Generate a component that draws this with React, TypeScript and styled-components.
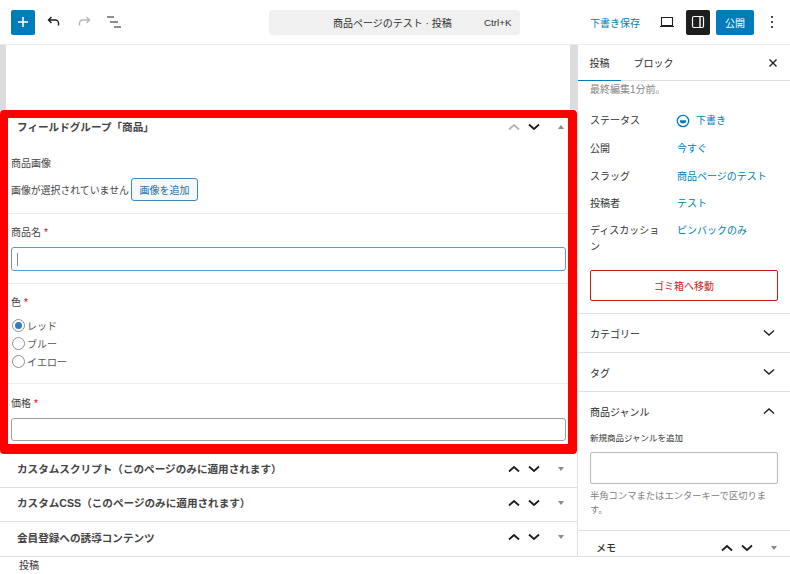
import React from 'react';
import styled, {createGlobalStyle} from 'styled-components';

const GlobalStyle = createGlobalStyle`
  html, body {
    margin: 0;
    padding: 0;
    background: #fff;
  }
  * {
    box-sizing: border-box;
  }
  body {
    font-family: "Liberation Sans", "Noto Sans CJK JP", sans-serif;
    color: #1e1e1e;
  }
`

const Page = styled.div`
  width: 790px;
  height: 574px;
  overflow: hidden;
  display: flex;
  flex-direction: column;
`

const TopBar = styled.header`
  height: 45px;
  flex-shrink: 0;
  display: flex;
  align-items: center;
  padding: 0 0 0 11px;
  border-bottom: 1px solid #ededed;
`

const AddButton = styled.button`
  width: 24px;
  height: 25px;
  border: 0;
  border-radius: 2px;
  background: #007cba;
  padding: 0;
  display: flex;
  align-items: center;
  justify-content: center;
  margin-right: 4px;
`

const ToolIcon = styled.span<{ $width?: number; $left?: number }>`
  width: ${(p) => p.$width ?? 30}px;
  height: 24px;
  margin-left: ${(p) => p.$left ?? 0}px;
  display: flex;
  align-items: center;
  justify-content: center;
  flex-shrink: 0;
`

const CommandBar = styled.div`
  width: 251px;
  height: 25px;
  margin-left: 140px;
  border-radius: 4px;
  background: #f0f0f0;
  display: flex;
  align-items: center;
  font-size: 10px;
  color: #2f2f2f;
`

const CommandTitle = styled.span`
  margin-left: 64px;
  width: 151px;
  white-space: nowrap;
`

const Shortcut = styled.span`
  font-size: 9.8px;
`

const SaveLink = styled.span`
  margin-left: 70px;
  font-size: 10px;
  color: #007cba;
  white-space: nowrap;
`

const ViewButton = styled.span`
  width: 24px;
  height: 25px;
  margin-left: 7px;
  border-radius: 2px;
  background: #1e1e1e;
  display: flex;
  align-items: center;
  justify-content: center;
  flex-shrink: 0;
`

const PublishButton = styled.span`
  width: 38px;
  height: 25px;
  margin-left: 6px;
  border-radius: 2px;
  background: #007cba;
  color: #fff;
  font-size: 10px;
  display: flex;
  align-items: center;
  justify-content: center;
  flex-shrink: 0;
`

const Body = styled.div`
  flex: 1;
  min-height: 0;
  display: flex;
`

const Main = styled.main`
  width: 578px;
  flex-shrink: 0;
  border-right: 1px solid #e0e0e0;
  overflow: hidden;
`

const Canvas = styled.div`
  height: 65px;
  border-left: 6px solid #dcdcdc;
  border-right: 7px solid #dcdcdc;
  background: #fff;
`

const Highlight = styled.section`
  width: 577px;
  height: 344px;
  border-style: solid;
  border-color: #ff0000;
  border-width: 8px 9px 10px 8px;
  border-radius: 4px;
  background: #fff;
  display: flex;
  flex-direction: column;
`

const BoxHeader = styled.div<{ $height?: number; $bordered?: boolean; $lift?: number }>`
  height: ${(p) => p.$height ?? 34}px;
  flex-shrink: 0;
  display: flex;
  align-items: center;
  padding-bottom: ${(p) => p.$lift ?? 0}px;
  border-bottom: ${(p) => (p.$bordered ? '1px solid #e0e0e0' : '0')};
`

const BoxTitle = styled.h2<{ $left: number }>`
  margin: 0 0 0 ${(p) => p.$left}px;
  flex: 1;
  font-size: 10.6px;
  font-weight: 700;
  color: #444;
  white-space: nowrap;
`

const Field = styled.div<{ $height: number; $top: number; $last?: boolean }>`
  height: ${(p) => p.$height}px;
  flex-shrink: 0;
  padding: ${(p) => p.$top}px 2px 0 3px;
  border-bottom: ${(p) => (p.$last ? '0' : '1px solid #ececec')};
`

const FieldLabel = styled.div`
  font-size: 10px;
  line-height: 14px;
  color: #444;
  white-space: nowrap;
`

const Required = styled.span`
  color: #e60000;
  margin-left: 3px;
`

const ImageRow = styled.div`
  display: flex;
  align-items: center;
  gap: 2px;
  margin-top: 7px;
  font-size: 9.9px;
  color: #444;
  white-space: nowrap;
`

const AddImageButton = styled.button`
  width: 67px;
  height: 23px;
  padding: 0;
  border: 1px solid #3f86bd;
  border-radius: 3px;
  background: #f6f7f7;
  color: #2271b1;
  font-family: inherit;
  font-size: 10px;
`

const TextBox = styled.div<{ $focused?: boolean }>`
  height: ${(p) => (p.$focused ? 24 : 23)}px;
  margin-top: 7px;
  border: 1px solid ${(p) => (p.$focused ? '#5d9acb' : '#9d9ea3')};
  border-radius: 3px;
  background: #fff;
  display: flex;
  align-items: center;
  padding-left: 5px;
`

const Caret = styled.span`
  width: 1px;
  height: 13px;
  background: #888;
`

const RadioList = styled.div`
  margin-top: 9px;
  display: flex;
  flex-direction: column;
  gap: 5px;
`

const RadioRow = styled.div`
  height: 13px;
  display: flex;
  align-items: center;
  gap: 2px;
  padding-left: 1px;
  font-size: 10px;
  color: #555;
`

const RadioMark = styled.span<{ $checked?: boolean }>`
  width: 13px;
  height: 13px;
  border-radius: 50%;
  border: 1px solid #8c8f94;
  background: #fff;
  display: flex;
  align-items: center;
  justify-content: center;

  &::after {
    content: '';
    width: 7px;
    height: 7px;
    border-radius: 50%;
    background: ${(p) => (p.$checked ? '#2f7fc5' : 'transparent')};
  }
`

const BoxControls = styled.div<{ $right: number }>`
  display: flex;
  align-items: center;
  margin-right: ${(p) => p.$right}px;
`

const ArrowSlot = styled.span`
  width: 20px;
  display: flex;
  justify-content: center;
`

const Toggle = styled.span<{ $up?: boolean }>`
  width: 0;
  height: 0;
  margin-left: 14px;
  border-left: 3px solid transparent;
  border-right: 3px solid transparent;
  ${(p) => (p.$up ? 'border-bottom' : 'border-top')}: 4px solid #8a8a8a;
`

const Sidebar = styled.aside`
  flex: 1;
  min-width: 0;
  overflow: hidden;
`

const Tabs = styled.div`
  height: 36px;
  display: flex;
  align-items: stretch;
  border-bottom: 1px solid #e0e0e0;
  font-size: 10px;
`

const Tab = styled.div<{ $active?: boolean; $width: number }>`
  width: ${(p) => p.$width}px;
  display: flex;
  align-items: center;
  justify-content: center;
  margin-bottom: -1px;
  border-bottom: 1px solid ${(p) => (p.$active ? '#007cba' : 'transparent')};
  color: #2b2b2b;
`

const CloseSlot = styled.span`
  margin-left: auto;
  width: 34px;
  display: flex;
  align-items: center;
  justify-content: center;
`

const Edited = styled.div`
  padding: 2px 0 0 12px;
  font-size: 10px;
  line-height: 14px;
  color: #858585;
`

const SummaryList = styled.div`
  padding: 16px 12px 0;
`

const SummaryRow = styled.div<{ $height: number }>`
  height: ${(p) => p.$height}px;
  display: grid;
  grid-template-columns: 75px 1fr;
  column-gap: 12px;
  font-size: 10px;
  line-height: 16px;
  color: #333;
`

const SummaryValue = styled.span`
  color: #007cba;
  display: flex;
  align-items: flex-start;
  gap: 6px;
  white-space: nowrap;
`

const StatusIcon = styled.svg`
  margin: 1px 0 0 -1px;
  flex-shrink: 0;
`

const TrashButton = styled.div`
  height: 31px;
  margin: 2px 12px 12px;
  border: 1px solid #cc1818;
  border-radius: 2px;
  display: flex;
  align-items: center;
  justify-content: center;
  font-size: 10px;
  color: #cc1818;
`

const PanelHead = styled.div`
  height: 39px;
  display: flex;
  align-items: center;
  justify-content: space-between;
  padding: 0 13px 0 12px;
  border-top: 1px solid #e0e0e0;
  font-size: 10px;
  color: #2b2b2b;
`

const PanelBody = styled.div`
  padding: 2px 12px 0;
  height: 100px;
`

const TinyLabel = styled.div`
  font-size: 8.5px;
  line-height: 12px;
  color: #333;
`

const TermInput = styled.div`
  height: 32px;
  margin-top: 8px;
  border: 1px solid #b9b9b9;
  border-radius: 2px;
`

const Help = styled.div`
  margin-top: 5px;
  font-size: 9.3px;
  line-height: 14px;
  color: #808080;
`

const MemoHead = styled.div`
  height: 34px;
  display: flex;
  align-items: center;
  border-top: 1px solid #e0e0e0;
  font-size: 10px;
  color: #333;
`

const MemoTitle = styled.span`
  margin-left: 18px;
  flex: 1;
  font-weight: 500;
`

const Footer = styled.footer`
  height: 18px;
  flex-shrink: 0;
  border-top: 1px solid #e0e0e0;
  padding-left: 19px;
  font-size: 10px;
  line-height: 17px;
  color: #333;
`

const Chevron = ({up, color = '#1e1e1e', weight = 1.8}: { up?: boolean; color?: string; weight?: number }) => (
    <svg width={16} height={16} viewBox="0 0 16 16" fill="none">
        <path d={up ? 'M3 10.5 8 6l5 4.5' : 'M3 5.5 8 10l5-4.5'} stroke={color} strokeWidth={weight}/>
    </svg>
)

const Controls = ({right, dimUp, up}: { right: number; dimUp?: boolean; up?: boolean }) => (
    <BoxControls $right={right}>
        <ArrowSlot><Chevron up color={dimUp ? '#b5b5b5' : '#1e1e1e'}/></ArrowSlot>
        <ArrowSlot><Chevron/></ArrowSlot>
        <Toggle $up={up}/>
    </BoxControls>
)

const rows = [
    'カスタムスクリプト（このページのみに適用されます）',
    'カスタムCSS（このページのみに適用されます）',
    '会員登録への誘導コンテンツ',
]

export default function App() {
    return (
        <Page>
            <GlobalStyle/>
            <TopBar>
                <AddButton aria-label="追加">
                    <svg width="14" height="14" viewBox="0 0 14 14">
                        <path d="M7 2v10M2 7h10" stroke="#fff" strokeWidth="1.6"/>
                    </svg>
                </AddButton>
                <ToolIcon>
                    <svg width="16" height="16" viewBox="0 0 16 16" fill="none">
                        <path d="M5.5 3 2.5 6l3 3M3 6h6.5a3 3 0 0 1 3 3v2.5" stroke="#1e1e1e" strokeWidth="1.4"/>
                    </svg>
                </ToolIcon>
                <ToolIcon>
                    <svg width="16" height="16" viewBox="0 0 16 16" fill="none">
                        <path d="M10.5 3l3 3-3 3M13 6H6.5a3 3 0 0 0-3 3v2.5" stroke="#b8b8b8" strokeWidth="1.4"/>
                    </svg>
                </ToolIcon>
                <ToolIcon>
                    <svg width="16" height="16" viewBox="0 0 16 16" fill="none">
                        <path d="M1 3h7M4 8h8M8 13h7" stroke="#1e1e1e" strokeWidth="1.2"/>
                    </svg>
                </ToolIcon>
                <CommandBar>
                    <CommandTitle>商品ページのテスト · 投稿</CommandTitle>
                    <Shortcut>Ctrl+K</Shortcut>
                </CommandBar>
                <SaveLink>下書き保存</SaveLink>
                <ToolIcon $width={24} $left={15}>
                    <svg width="16" height="16" viewBox="0 0 16 16" fill="none">
                        <path d="M2.5 3.5h11v8h-11zM1 12.500h14" stroke="#1e1e1e" strokeWidth="1.1"/>
                    </svg>
                </ToolIcon>
                <ViewButton>
                    <svg width="16" height="16" viewBox="0 0 16 16" fill="none">
                        <rect x="2.5" y="2.5" width="11" height="11" rx="1.5" stroke="#fff" strokeWidth="1.2"/>
                        <path d="M10 3v10" stroke="#fff" strokeWidth="1.4"/>
                    </svg>
                </ViewButton>
                <PublishButton>公開</PublishButton>
                <ToolIcon $width={36}>
                    <svg width="4" height="14" viewBox="0 0 4 14" fill="#1e1e1e">
                        <circle cx="2" cy="2" r="1.1"/>
                        <circle cx="2" cy="7" r="1.1"/>
                        <circle cx="2" cy="12" r="1.1"/>
                    </svg>
                </ToolIcon>
            </TopBar>
            <Body>
                <Main>
                    <Canvas/>
                    <Highlight>
                        <BoxHeader $height={17}>
                            <BoxTitle $left={9}>フィールドグループ「商品」</BoxTitle>
                            <Controls right={4} dimUp up/>
                        </BoxHeader>
                        <Field $height={79} $top={22}>
                            <FieldLabel>商品画像</FieldLabel>
                            <ImageRow>
                                画像が選択されていません
                                <AddImageButton>画像を追加</AddImageButton>
                            </ImageRow>
                        </Field>
                        <Field $height={70} $top={12}>
                            <FieldLabel>商品名<Required>*</Required></FieldLabel>
                            <TextBox $focused><Caret/></TextBox>
                        </Field>
                        <Field $height={100} $top={12}>
                            <FieldLabel>色<Required>*</Required></FieldLabel>
                            <RadioList>
                                <RadioRow><RadioMark $checked/>レッド</RadioRow>
                                <RadioRow><RadioMark/>ブルー</RadioRow>
                                <RadioRow><RadioMark/>イエロー</RadioRow>
                            </RadioList>
                        </Field>
                        <Field $height={60} $top={13} $last>
                            <FieldLabel>価格<Required>*</Required></FieldLabel>
                            <TextBox/>
                        </Field>
                    </Highlight>
                    {rows.map((title, i) => (
                        <BoxHeader key={title} $bordered={i < rows.length - 1} $lift={4}>
                            <BoxTitle $left={17}>{title}</BoxTitle>
                            <Controls right={13}/>
                        </BoxHeader>
                    ))}
                </Main>
                <Sidebar>
                    <Tabs>
                        <Tab $active $width={43}>投稿</Tab>
                        <Tab $width={65}>ブロック</Tab>
                        <CloseSlot>
                            <svg width="14" height="14" viewBox="0 0 14 14" fill="none">
                                <path d="M3.5 3.5l7 7M10.5 3.5l-7 7" stroke="#1e1e1e" strokeWidth="1.4"/>
                            </svg>
                        </CloseSlot>
                    </Tabs>
                    <Edited>最終編集1分前。</Edited>
                    <SummaryList>
                        <SummaryRow $height={28}>
                            <span>ステータス</span>
                            <SummaryValue>
                                <StatusIcon width="14" height="14" viewBox="0 0 14 14" fill="none">
                                    <circle cx="7" cy="7" r="5.7" stroke="#007cba" strokeWidth="1.3"/>
                                    <path d="M3.8 6.3h6.4a3.2 3.2 0 0 1-6.4 0z" fill="#007cba"/>
                                </StatusIcon>
                                下書き
                            </SummaryValue>
                        </SummaryRow>
                        <SummaryRow $height={28}><span>公開</span><SummaryValue>今すぐ</SummaryValue></SummaryRow>
                        <SummaryRow $height={27}><span>スラッグ</span><SummaryValue>商品ページのテスト</SummaryValue></SummaryRow>
                        <SummaryRow $height={27}><span>投稿者</span><SummaryValue>テスト</SummaryValue></SummaryRow>
                        <SummaryRow $height={45}><span>ディスカッション</span><SummaryValue>ピンバックのみ</SummaryValue></SummaryRow>
                    </SummaryList>
                    <TrashButton>ゴミ箱へ移動</TrashButton>
                    <PanelHead>カテゴリー<Chevron weight={1.4}/></PanelHead>
                    <PanelHead>タグ<Chevron weight={1.4}/></PanelHead>
                    <PanelHead>商品ジャンル<Chevron up weight={1.4}/></PanelHead>
                    <PanelBody>
                        <TinyLabel>新規商品ジャンルを追加</TinyLabel>
                        <TermInput/>
                        <Help>半角コンマまたはエンターキーで区切ります。</Help>
                    </PanelBody>
                    <MemoHead>
                        <MemoTitle>メモ</MemoTitle>
                        <Controls right={13}/>
                    </MemoHead>
                </Sidebar>
            </Body>
            <Footer>投稿</Footer>
        </Page>
    );
}
